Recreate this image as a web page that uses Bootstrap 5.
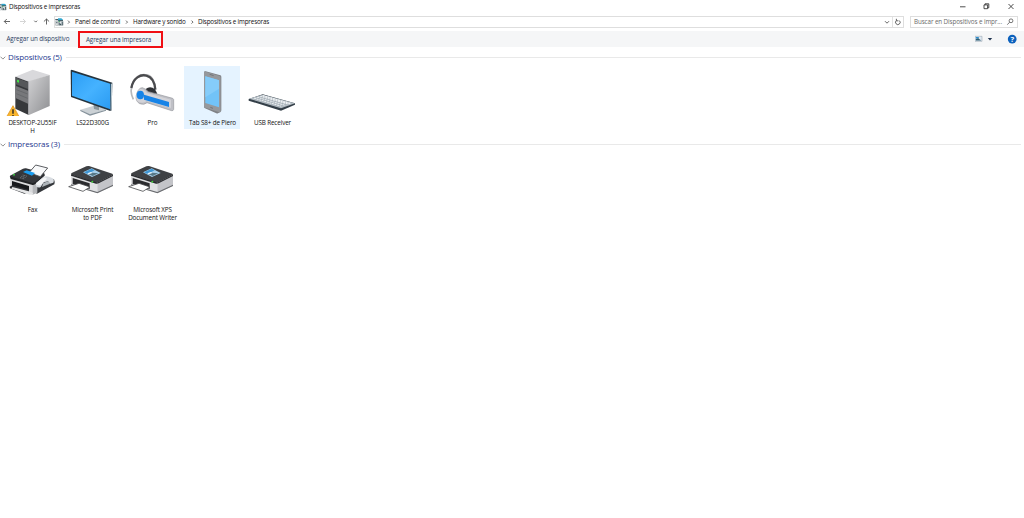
<!DOCTYPE html>
<html lang="es">
<head>
<meta charset="utf-8">
<title>Dispositivos e impresoras</title>
<link href="https://cdn.jsdelivr.net/npm/bootstrap@5.3.0/dist/css/bootstrap.min.css" rel="stylesheet">
<style>
body{font:6.3px/8px "Open Sans","Noto Sans",sans-serif;color:#111;background:#fff;letter-spacing:-.13px;height:518px;overflow:hidden}
svg{display:block;flex:none}
.titlebar{height:13px}
.titlebar span,.address{letter-spacing:-.16px}
.navrow{height:18px;padding-left:3px;padding-right:6px}
.field{height:12px;border:1px solid #dedede}
.address{width:850px;margin-left:4px}
.search{width:108px;margin-left:6px;color:#6c6c6c;letter-spacing:-.11px}
.crumb{white-space:nowrap}
.tools{height:16px;background:#f5f6f7;color:#2c4163;letter-spacing:-.12px}
.marked{width:85px;height:17px;border:2px solid #f00f14;margin-left:6px;margin-top:1px;padding-left:6px}
.group-head{height:12px;color:#26388f;font-size:8px;line-height:11px;letter-spacing:-.14px}
.rule{height:1px;background:#e9e9e9}
.tiles{padding-left:4px;gap:4px}
.tile{width:56px;height:63px;text-align:center}
.tile.chosen{background:#e5f3ff}
.tile span{display:block;margin:2.5px -3px 0 -2px;white-space:nowrap}
.tile b{display:block;font-weight:400}
</style>
<script src="https://cdn.jsdelivr.net/npm/bootstrap@5.3.0/dist/js/bootstrap.bundle.min.js"></script>
</head>
<body>
<svg width="0" height="0" class="position-absolute">
<defs>
<linearGradient id="screen" x1="0" y1="0" x2="1" y2="1"><stop offset="0" stop-color="#2b9df4"/><stop offset=".5" stop-color="#45b2ff"/><stop offset="1" stop-color="#2a9bf2"/></linearGradient>
<linearGradient id="metal" x1="0" y1="0" x2="1" y2="1"><stop offset="0" stop-color="#d2d2d4"/><stop offset="1" stop-color="#8e8f92"/></linearGradient>
<symbol id="devices" viewBox="0 0 27 24">
<path d="M1 3h9v3H1z" fill="#4b5a60"/><path d="M9 1h10l5 4v4H9z" fill="#31a7cf"/><path d="M10 6h14v3H10z" fill="#44606a"/><path d="M2 8h7v14H2z" fill="#eef0f1" stroke="#6a777c" stroke-width="1.2"/><path d="M11 10h13v12H11z" fill="#e7ecee" stroke="#596b70" stroke-width="1.5"/><path d="M4 11h3v5H4zM13 12l6 9h-6zM20 12h3v9h-3z" fill="#344c55"/><path d="M11 9h4v3h-4z" fill="#4fad70"/>
</symbol>
<symbol id="printer" viewBox="180 -9 168 150">
<path d="M201 55l79 25v31l-79-24z" fill="#e0e1e3"/><path d="M280 80l47-23v32l-47 22z" fill="#c3c4c8"/>
<path d="M201 85l79 23 47-22v4l-47 22-79-24z" fill="#6a6c70"/>
<path d="M203 51l44-20q4-2 8-1l70 23q4 2 0 5l-41 21q-4 2-8 1l-73-24q-4-2 0-5z" fill="#3f4144"/>
<path d="M201 55l76 24q3 1 7-1l43-22v4l-43 22q-4 2-8 1l-75-24z" fill="#292b2e"/>
<path d="M206 66l51 16v17l-51-15z" fill="#2b2c2f"/>
<path d="M194 92l31-10 33 11-21 13z" fill="#fff" stroke="#3c3e41" stroke-width="2.2"/>
<path d="M237 49l26-12 27 14-26 12z" fill="#a7d0ec"/><path d="M240 49l23-11 9 5-22 11z" fill="#3f96d3"/><path d="M252 54l12-4 19 2-17 8z" fill="#587887"/><path d="M250 52l11-4 4 3-11 4z" fill="#eaf5fc"/>
<circle cx="265" cy="77" r="3" fill="#43ce3f"/>
</symbol>
</defs>
</svg>

<header class="titlebar d-flex align-items-center">
<svg width="7" height="8" viewBox="4 0 23 24"><use href="#devices" width="27" height="24"/></svg>
<span class="flex-grow-1" style="margin-left:2px">Dispositivos e impresoras</span>
<svg width="64" height="12" viewBox="0 0 64 12" fill="none" stroke="#222" stroke-width=".8"><path d="M0 5.8h5.5M24 3.9h3.6v3.8H24zM25 3.9V2.8h3.8v4h-1.2M48.5 3l5 5M53.5 3l-5 5"/></svg>
</header>

<nav class="navrow d-flex align-items-center">
<svg width="47" height="12" viewBox="0 0 47 12" fill="none" stroke="#555" stroke-width=".9"><path d="M7 5.5H1.3M3.8 3L1.3 5.5 3.8 8"/><path d="M17 5.5h5.5M20 3l2.5 2.5L20 8" stroke="#d0d0d0"/><path d="M31.3 4.7l1.4 1.4 1.4-1.4M43.5 8.5V3M40.9 5.5L43.5 3l2.6 2.5"/></svg>
<div class="address field d-flex align-items-center">
<svg width="9" height="8" viewBox="0 0 27 24"><use href="#devices" width="27" height="24"/></svg>
<svg width="11" height="8" viewBox="0 0 11 8" fill="none" stroke="#444" stroke-width=".8"><path d="M4 2.6l1.5 1.5L4 5.6"/></svg>
<span class="crumb" style="width:48px">Panel de control</span>
<svg width="10" height="8" viewBox="0 0 10 8" fill="none" stroke="#444" stroke-width=".8"><path d="M3 2.6l1.5 1.5L3 5.6"/></svg>
<span class="crumb" style="width:54.5px">Hardware y sonido</span>
<svg width="10.5" height="8" viewBox="0 0 10.5 8" fill="none" stroke="#444" stroke-width=".8"><path d="M3.5 2.6L5 4.1 3.5 5.6"/></svg>
<span class="crumb flex-grow-1">Dispositivos e impresoras</span>
<svg width="20" height="12" viewBox="0 0 20 12" fill="none" stroke="#555" stroke-width=".9"><path d="M2 5.2l2 2 2-2"/><path d="M9.5 0v12" stroke="#dedede"/><path d="M13.4 4.5a2.3 2.3 0 1 0 3 .1M13.4 2.8v2h2"/></svg>
</div>
<div class="search field d-flex align-items-center">
<span class="crumb flex-grow-1" style="padding-left:3px">Buscar en Dispositivos e impr...</span>
<svg width="13" height="10" viewBox="0 0 13 10" fill="none" stroke="#555" stroke-width=".8"><circle cx="7" cy="3.8" r="1.9"/><path d="M5.6 5.2L3.3 7.7"/></svg>
</div>
</nav>

<div class="tools d-flex align-items-center">
<span class="crumb" style="padding-left:6.5px;width:72px">Agregar un dispositivo</span>
<span class="marked crumb d-flex align-items-center">Agregar una impresora</span>
<svg class="ms-auto" width="49" height="16" viewBox="0 0 49 16"><path d="M0 5.3h7v5H0z" fill="#dfe8f2" stroke="#9dabb5" stroke-width=".6"/><path d="M.8 6h3v1.5h-3z" fill="#2d8fd0"/><path d="M.8 8l2.4-.7 3 2.3H.8z" fill="#2e5e73"/><path d="M12.8 7h4.4L15 9.5z" fill="#1f3350"/><circle cx="37.2" cy="8.1" r="4.4" fill="#0c61bd"/><text x="37.2" y="10.8" fill="#fff" font-size="7.5" font-weight="700" text-anchor="middle">?</text></svg>
</div>

<main>
<div class="group-head d-flex align-items-center" style="margin-top:4.5px">
<svg width="8" height="8" viewBox="0 0 8 8" fill="none" stroke="#777" stroke-width=".8"><path d="M.5 2.7l2.4 2.4 2.4-2.4"/></svg>
<span style="margin-top:-1.5px">Dispositivos (5)</span><i class="rule flex-grow-1" style="margin-left:4px;margin-right:3px"></i>
</div>
<section class="tiles d-flex" style="margin-top:2.5px">
<div class="tile">
<svg width="56" height="50" viewBox="12 18 168 150">
<path d="M46 50L98 29l51 16-63 21z" fill="#d9d9dc"/><path d="M86 64l63-19v93l-62 27z" fill="url(#metal)"/>
<path d="M46 50l40 15v100l-40-19z" fill="#36383b"/><path d="M48 53l36 14v20L48 73z" fill="#55575a"/><path d="M48 78l36 14v39l-36-16z" fill="#77787b"/><path d="M49 89l34 13M49 101l34 14" stroke="#5e6063" stroke-width="2"/><path d="M51 59l6 2v7l-6-2z" fill="#42e447"/><path d="M86 65v99" stroke="#c4c4c8" stroke-width="2"/>
<path d="M39 137l19 34q1 3-2 3H22q-4 0-2-4z" fill="#f9b52d" stroke="#d98c17" stroke-width="2"/><path d="M39 148v13M39 165v4" stroke="#222" stroke-width="4"/>
</svg><span><b>DESKTOP-2U55IF</b><b>H</b></span></div>
<div class="tile">
<svg width="56" height="50" viewBox="6 18 168 150">
<path d="M55 149l48-14 29 14-48 15z" fill="#cbd1d5"/><path d="M55 149v4l29 14 48-15v-3l-48 14z" fill="#84919a"/><path d="M94 130l17 5v16l-15-4z" fill="#8b979e"/>
<path d="M26 31l3-2 122 39-2 83-4 2L27 111z" fill="#25333d"/><path d="M30 35l115 36v77L30 107z" fill="url(#screen)"/><path d="M147 72l4-3-2 82-3 2z" fill="#b9c7cf"/>
</svg><span><b>LS22D300G</b></span></div>
<div class="tile">
<svg width="56" height="50" viewBox="6 18 168 150">
<path d="M34 118C16 81 40 42 68 44q29 1 32 44" fill="none" stroke="#b7b8ba" stroke-width="5"/><path d="M28 84C33 53 57 42 73 47q24 6 27 42" fill="none" stroke="#4a4b4e" stroke-width="7"/>
<path d="M71 87q14-11 28 1l7 13-34 3z" fill="#303236"/>
<path d="M61 83q10 3 18 12l73 20q4 2 3 8v25q-1 5-6 4l-74-24q-8 8-22 3-14-8-10-26 5-21 18-22z" fill="#bfc0c6" stroke="#97989e" stroke-width="2"/><path d="M56 87q10 0 19 12l72 20v25l-73-21q-10 8-21 4-13-5-10-20 3-17 13-20z" fill="#d3d3d8"/>
<ellipse cx="55" cy="105" rx="11" ry="13" fill="#1683e7"/><path d="M66 104l75 22v15l-75-22z" fill="#1683e7"/>
</svg><span><b>Pro</b></span></div>
<div class="tile chosen">
<svg width="56" height="50" viewBox="6 18 168 150">
<path d="M66 38q0-5 5-4l44 12q3 1 3 5v100q0 4-3 5l-7 4q-2 1-5 0l-34-15q-3-2-3-5z" fill="#7f8185"/><path d="M66 38q0-4 5-3l42 13q3 1 3 5v101q0 4-4 3l-42-14q-4-2-4-5z" fill="#96989c"/><path d="M70 49l41 12v81l-41-13z" fill="#72c3f8"/><path d="M70 49l41 12v25l-41 26z" fill="#85ccfa"/><path d="M83 43l12 4M85 142l8 3" stroke="#5f6266" stroke-width="2"/>
</svg><span><b>Tab S8+ de Piero</b></span></div>
<div class="tile">
<svg width="56" height="50" viewBox="6 18 168 150">
<path d="M20 117l42-14 97 27v4l-42 18-97-30z" fill="#343f48"/><path d="M21 116l41-12 97 26-42 15z" fill="#b4bdc4"/>
<path d="M36 115l81 24M45 112l83 24M54 109l84 24M62 107l84 24" stroke="#eef1f3" stroke-width="4" stroke-dasharray="6 2"/><path d="M36 117l81 24M45 114l83 24M54 111l84 24" stroke="#83909a" stroke-width="1.2"/>
</svg><span><b>USB Receiver</b></span></div>
</section>

<div class="group-head d-flex align-items-center" style="margin-top:9.5px">
<svg width="8" height="8" viewBox="0 0 8 8" fill="none" stroke="#777" stroke-width=".8"><path d="M.5 2.7l2.4 2.4 2.4-2.4"/></svg>
<span style="margin-top:-1.5px">Impresoras (3)</span><i class="rule flex-grow-1" style="margin-left:4px;margin-right:3px"></i>
</div>
<section class="tiles d-flex" style="margin-top:2.5px">
<div class="tile">
<svg width="56" height="50" viewBox="0 -9 168 150">
<path d="M100 82l50-12q4 10 1 15l-52 28-8-4z" fill="#34373b"/>
<path d="M19 66l68 18v32l-68-20z" fill="#d9dadc"/><path d="M86 84l14-9v35l-14 6z" fill="#b5b7ba"/>
<path d="M18 59l39-21q5-2 9-1l53 14q5 2 1 6L93 81q-5 4-11 2L20 65q-4-3-2-6z" fill="#35373b"/>
<path d="M18 61l66 20q4 1 9-2l29-25v5L94 84q-5 4-11 2L20 69z" fill="#222427"/>
<path d="M75 50l20-23 36 9-22 26z" fill="#f8f9fa" stroke="#3c3f43" stroke-width="2.5"/><path d="M57 48l11-5 25 8-9 8z" fill="#189cf0"/>
<path d="M56 57l14 4M52 61l14 4M48 65l14 4" stroke="#98a0a5" stroke-width="2" stroke-dasharray="3 2"/>
<path d="M24 75l51 15v15l-51-12z" fill="#17191c"/><path d="M17 92l8-4 50 14v7l-14 4-43-16z" fill="#303236"/><path d="M25 93l49 13 13 5v4l-10 1-55-18z" fill="#e6e7e8"/>
<path d="M96 81l23-19q7-3 16 0l11 5q6 5 2 13l-10 3-6-7-13 3-9 14q-7 4-14-2z" fill="#d9dde2"/><path d="M97 82l22-17q6-1 10 3l-18 18q-6 5-14-1z" fill="#f3f5f6"/><path d="M118 81l15-5 5 7-24 10z" fill="#aeb5ba"/><circle cx="30" cy="56" r="3" fill="#3bc43f"/>
</svg><span><b>Fax</b></span></div>
<div class="tile"><svg width="56" height="50"><use href="#printer" width="56" height="50"/></svg><span><b>Microsoft Print</b><b>to PDF</b></span></div>
<div class="tile"><svg width="56" height="50"><use href="#printer" width="56" height="50"/></svg><span><b>Microsoft XPS</b><b>Document Writer</b></span></div>
</section>
</main>
</body>
</html>
